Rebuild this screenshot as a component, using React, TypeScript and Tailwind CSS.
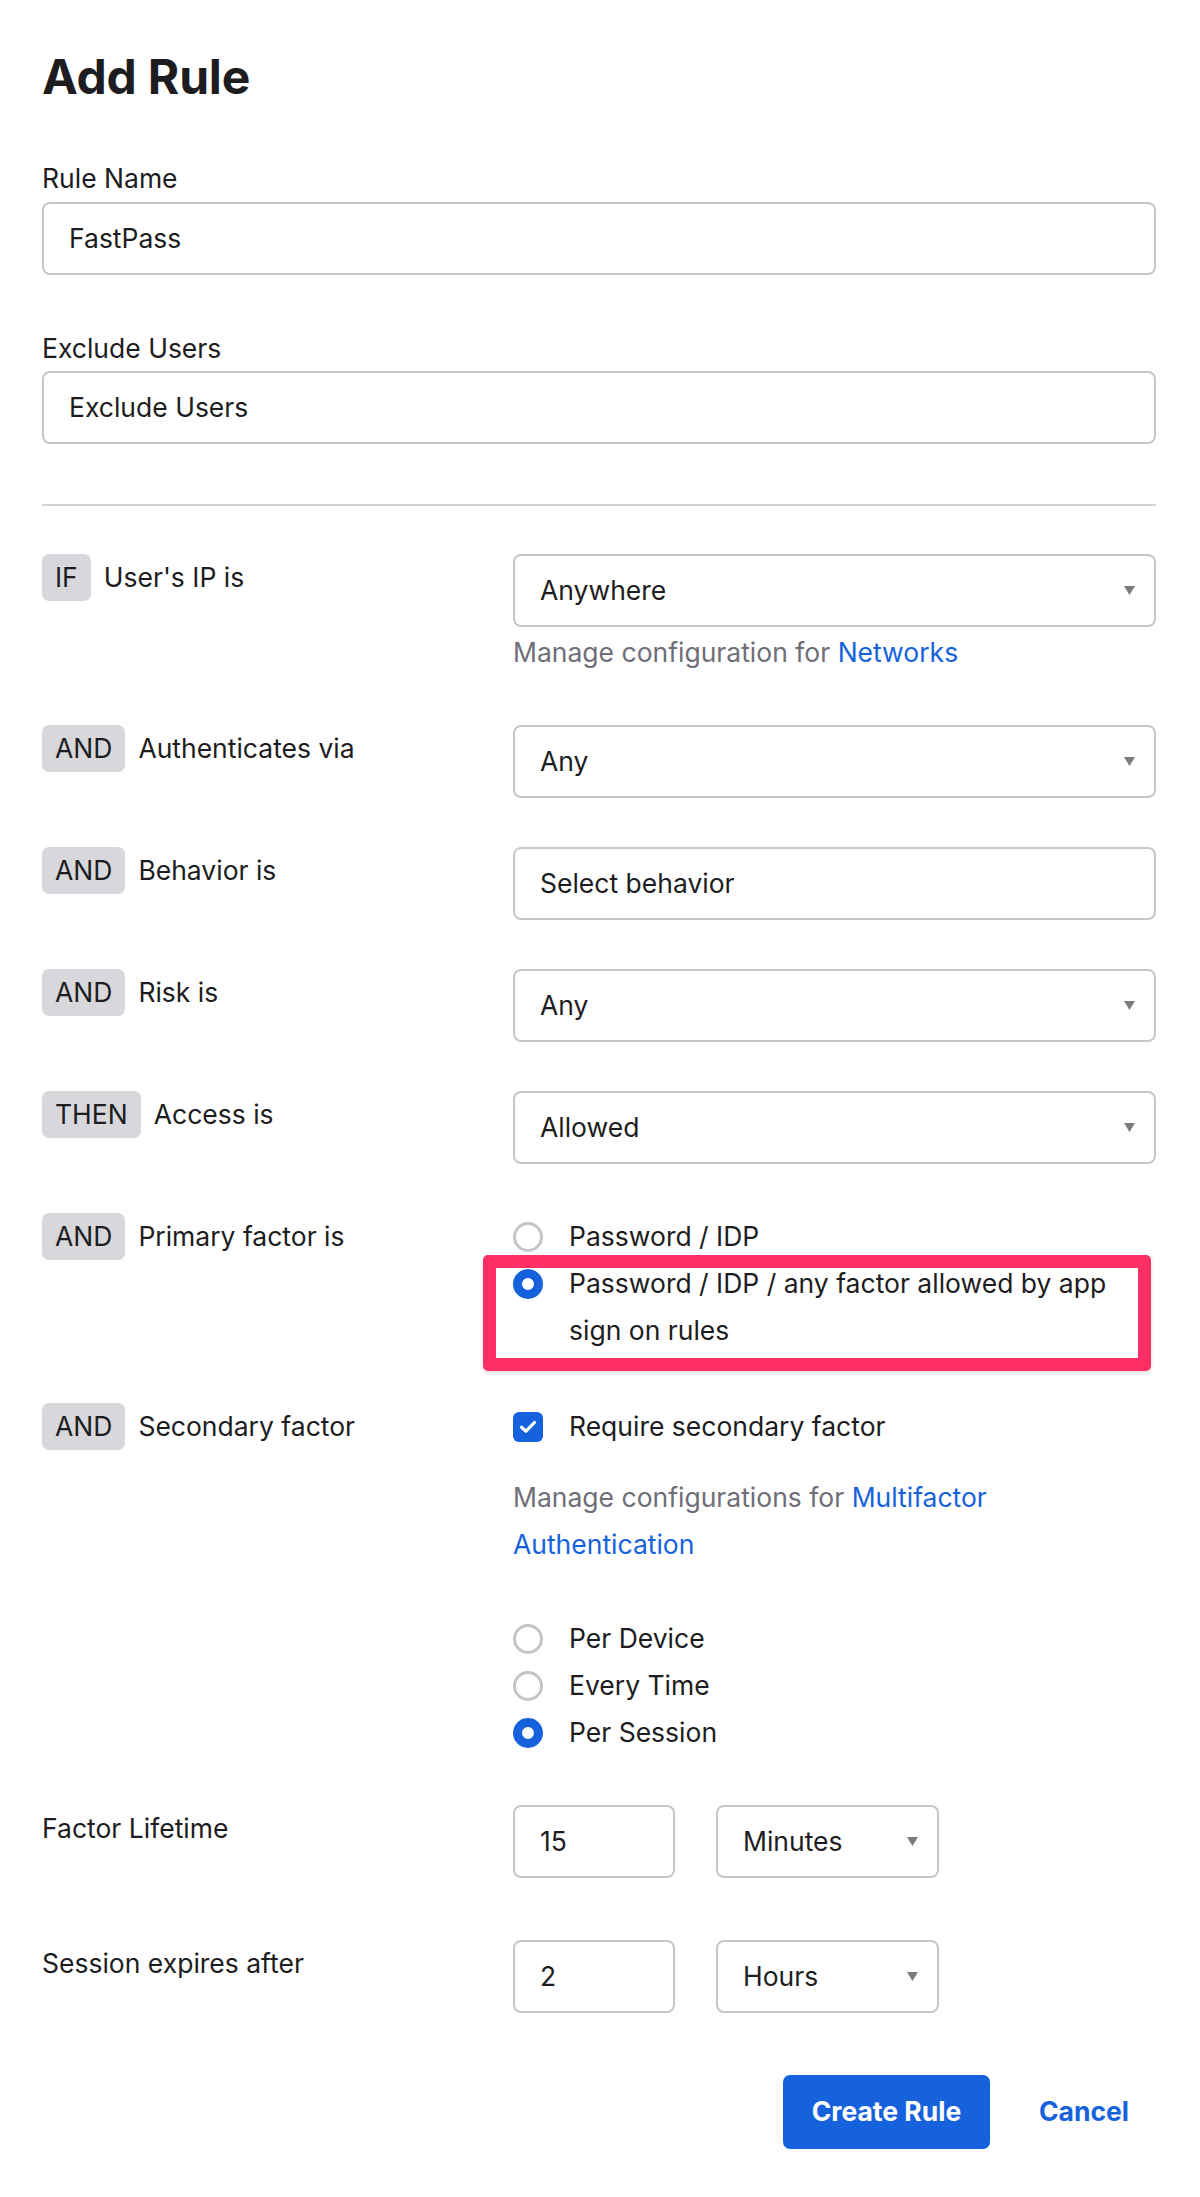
import React from "react";

function Arrow() {
  return (
    <svg width="11" height="9" viewBox="0 0 11 9" className="shrink-0">
      <path d="M0 0 L11 0 L5.5 9 Z" fill="#7b7b80" />
    </svg>
  );
}

function Select({ value, arrow = true, className = "" }: { value: string; arrow?: boolean; className?: string }) {
  return (
    <div
      className={`h-[73px] border-2 border-[#c6c6cd] rounded-[8px] bg-white flex items-center justify-between pl-[25px] pr-[19px] ${className}`}
    >
      <span>{value}</span>
      {arrow && <Arrow />}
    </div>
  );
}

function Badge({ children }: { children: React.ReactNode }) {
  return (
    <span className="h-[47px] px-[13px] rounded-[7px] bg-[#d7d7dc] flex items-center leading-[47px] shrink-0">
      {children}
    </span>
  );
}

function CondLabel({ badge, text }: { badge?: string; text: string }) {
  return (
    <div className="flex items-start gap-[13px] leading-[47px]">
      {badge && <Badge>{badge}</Badge>}
      <span>{text}</span>
    </div>
  );
}

function Radio({ checked }: { checked?: boolean }) {
  return checked ? (
    <span className="w-[30px] h-[30px] rounded-full border-[9px] border-[#1662dd] bg-white shrink-0 block" />
  ) : (
    <span className="w-[30px] h-[30px] rounded-full border-[3px] border-[#c3c3ca] bg-white shrink-0 block" />
  );
}

function RadioLine({ checked, children }: { checked?: boolean; children: React.ReactNode }) {
  return (
    <div className="flex items-start gap-[26px] leading-[47px]">
      <span className="h-[47px] flex items-center">
        <Radio checked={checked} />
      </span>
      <span>{children}</span>
    </div>
  );
}

export default function App() {
  return (
    <div className="w-[1200px] min-h-[2197px] bg-white pl-[42px] pr-[44px] pt-[49px] pb-[48px] font-['Inter',sans-serif] text-[26.5px] text-[#1d1d21]">
      <h1 className="text-[48px] font-bold leading-[56px] tracking-[-0.2px]">Add Rule</h1>

      <div className="mt-[53px]">
        <div className="leading-[40px] mb-[4px]">Rule Name</div>
        <Select value="FastPass" arrow={false} />
      </div>

      <div className="mt-[53px]">
        <div className="leading-[40px] mb-[3px]">Exclude Users</div>
        <Select value="Exclude Users" arrow={false} />
      </div>

      <div className="mt-[60px] h-[2px] bg-[#d2d2d8]" />

      <div className="mt-[48px] flex flex-col gap-[49px]">
        <div className="grid grid-cols-[471px_1fr]">
          <CondLabel badge="IF" text="User's IP is" />
          <div>
            <Select value="Anywhere" />
            <div className="mt-[2px] leading-[47px] text-[#6e6e78]">
              Manage configuration for <span className="text-[#1662dd]">Networks</span>
            </div>
          </div>
        </div>

        <div className="grid grid-cols-[471px_1fr]">
          <CondLabel badge="AND" text="Authenticates via" />
          <Select value="Any" />
        </div>

        <div className="grid grid-cols-[471px_1fr]">
          <CondLabel badge="AND" text="Behavior is" />
          <Select value="Select behavior" arrow={false} />
        </div>

        <div className="grid grid-cols-[471px_1fr]">
          <CondLabel badge="AND" text="Risk is" />
          <Select value="Any" />
        </div>

        <div className="grid grid-cols-[471px_1fr]">
          <CondLabel badge="THEN" text="Access is" />
          <Select value="Allowed" />
        </div>

        <div className="grid grid-cols-[471px_1fr]">
          <CondLabel badge="AND" text="Primary factor is" />
          <div className="relative">
            <RadioLine>Password / IDP</RadioLine>
            <RadioLine checked>
              Password / IDP / any factor allowed by app
              <br />
              sign on rules
            </RadioLine>
            <div className="absolute left-[-30px] top-[42px] w-[668px] h-[116px] border-[13px] border-[#fe2f65] rounded-[5px] shadow-[0_2px_4px_rgba(0,0,0,0.15)] pointer-events-none" />
          </div>
        </div>

        <div className="grid grid-cols-[471px_1fr]">
          <CondLabel badge="AND" text="Secondary factor" />
          <div>
            <div className="flex items-center gap-[26px] h-[47px]">
              <span className="w-[30px] h-[30px] rounded-[6px] bg-[#1662dd] flex items-center justify-center shrink-0">
                <svg width="18" height="14" viewBox="0 0 18 14">
                  <path d="M2.5 7.2 L7 11.2 L15.5 2.5" fill="none" stroke="white" strokeWidth="3.2" strokeLinecap="round" strokeLinejoin="round" />
                </svg>
              </span>
              <span>Require secondary factor</span>
            </div>
            <div className="mt-[24px] leading-[47px] text-[#6e6e78]">
              Manage configurations for <span className="text-[#1662dd]">Multifactor</span>
              <br />
              <span className="text-[#1662dd]">Authentication</span>
            </div>
            <div className="mt-[47px]">
              <RadioLine>Per Device</RadioLine>
              <RadioLine>Every Time</RadioLine>
              <RadioLine checked>Per Session</RadioLine>
            </div>
          </div>
        </div>

        <div className="grid grid-cols-[471px_1fr]">
          <div className="leading-[47px]">Factor Lifetime</div>
          <div className="flex gap-[41px]">
            <Select value="15" arrow={false} className="w-[162px]" />
            <Select value="Minutes" className="w-[223px]" />
          </div>
        </div>

        <div className="grid grid-cols-[471px_1fr] mt-[13px]">
          <div className="leading-[47px]">Session expires after</div>
          <div className="flex gap-[41px]">
            <Select value="2" arrow={false} className="w-[162px]" />
            <Select value="Hours" className="w-[223px]" />
          </div>
        </div>

        <div className="mt-[13px] flex justify-end items-center">
          <button className="h-[74px] w-[207px] rounded-[7px] bg-[#1662dd] text-white font-bold text-[26.5px]">
            Create Rule
          </button>
          <button className="ml-[49px] mr-[27px] text-[#1662dd] font-bold text-[26.5px]">Cancel</button>
        </div>
      </div>
    </div>
  );
}
